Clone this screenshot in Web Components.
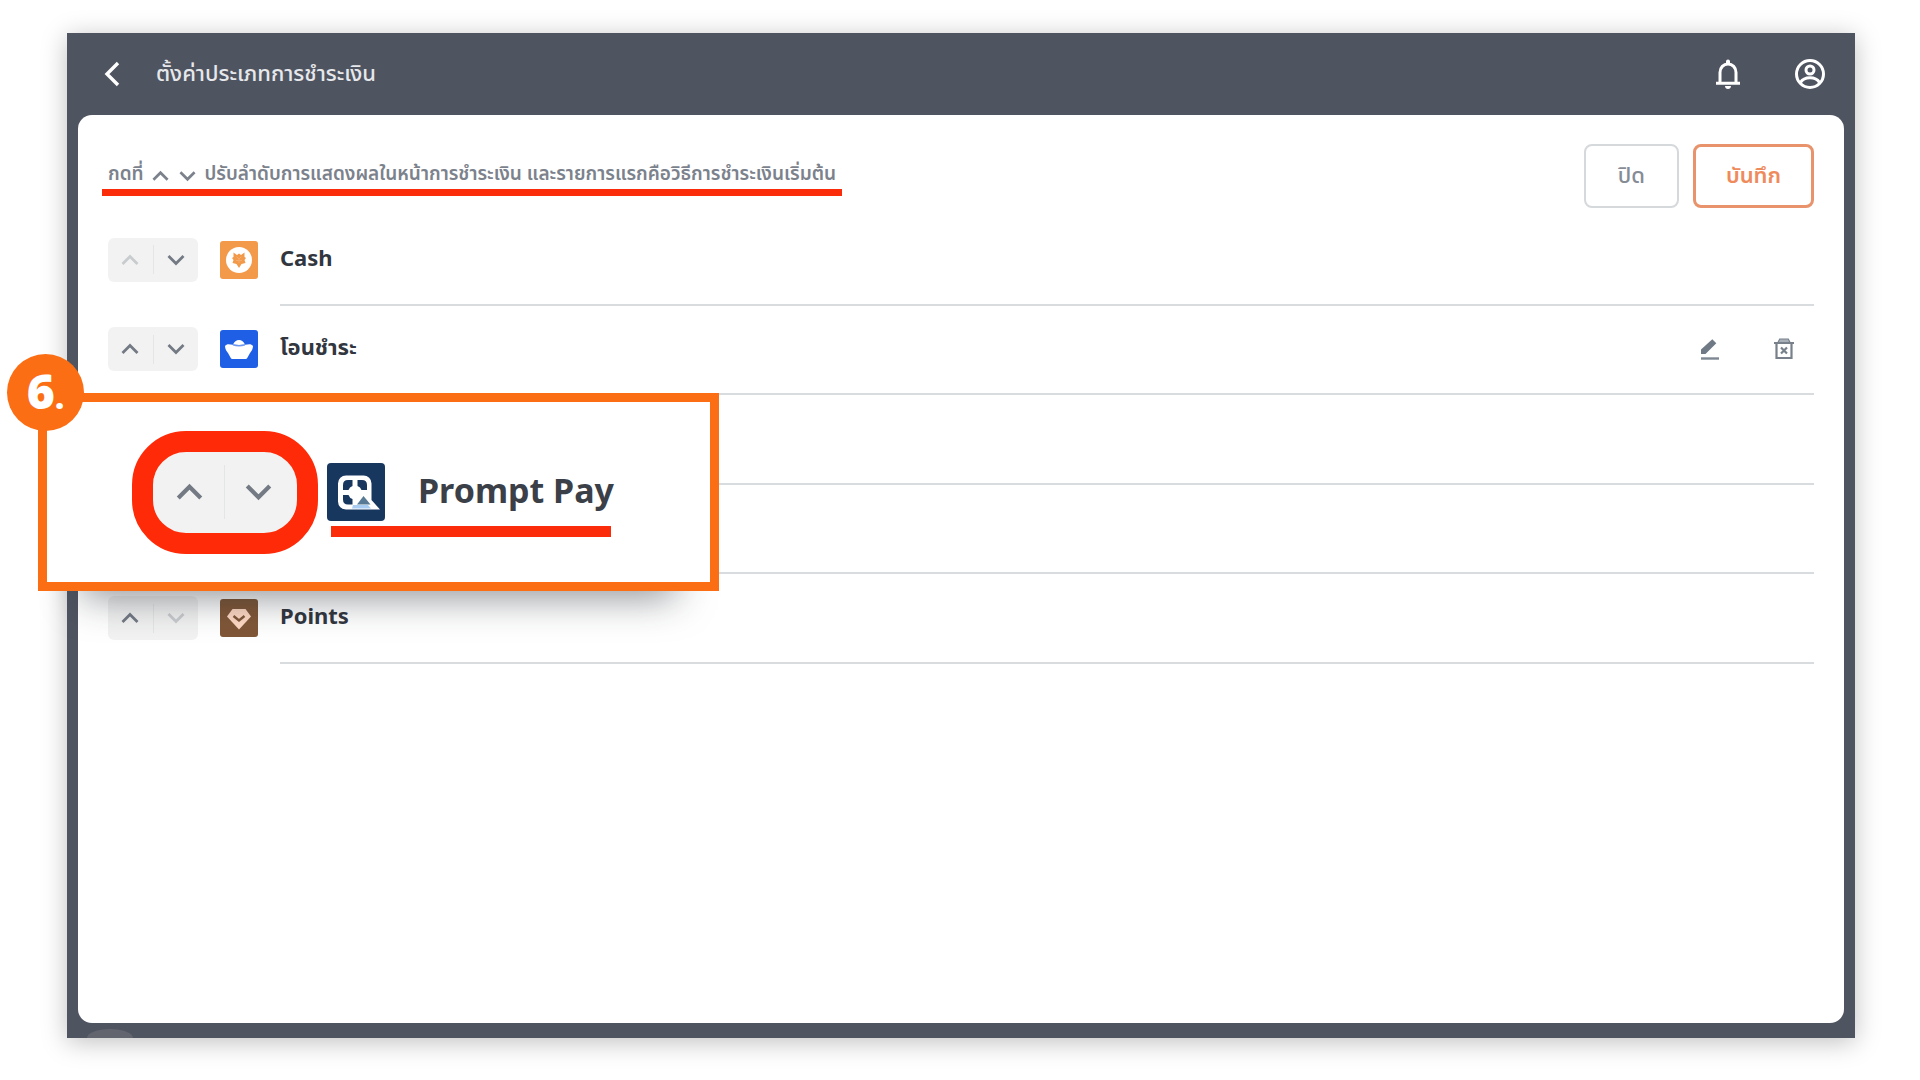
<!DOCTYPE html>
<html lang="th">
<head>
<meta charset="utf-8">
<meta name="viewport" content="width=device-width, initial-scale=1">
<title>ตั้งค่าประเภทการชำระเงิน</title>
<style>
  body {
    margin: 0;
    background: #fff;
    font-family: "Noto Sans", "Noto Sans Thai", "Open Sans", sans-serif;
    color: #32363f;
  }
</style>
</head>
<body>
  <guide-stage>
    <payment-screen>
      <app-header slot="header">ตั้งค่าประเภทการชำระเงิน</app-header>
      <order-toolbar></order-toolbar>
      <payment-list>
        <payment-row icon="cash" first>Cash</payment-row>
        <payment-row icon="transfer" editable>โอนชำระ</payment-row>
        <payment-row></payment-row>
        <payment-row></payment-row>
        <payment-row icon="points" last>Points</payment-row>
      </payment-list>
    </payment-screen>
    <step-callout slot="callout" step="6" icon="promptpay">Prompt Pay</step-callout>
  </guide-stage>

  <script>
    const ICONS = {
      back: '<svg viewBox="0 0 16 26"><path d="M14 2 3 13l11 11" fill="none" stroke="#fff" stroke-width="3.4"/></svg>',
      up: '<svg viewBox="0 0 18 12"><path d="M1.5 10 9 2.5l7.5 7.5" fill="none" stroke="currentColor" stroke-width="2.8"/></svg>',
      down: '<svg viewBox="0 0 18 12"><path d="M1.5 2 9 9.5l7.5-7.5" fill="none" stroke="currentColor" stroke-width="2.8"/></svg>',
      bell: '<svg viewBox="0 0 26 30"><path d="M5 24V13.500C5 8.500 8.500 5 13 5s8 3.500 8 8.500V24" fill="none" stroke="#fff" stroke-width="3"/><path d="M1 22.800h24v3H1zM10 27h6c0 1.800-1.300 3-3 3s-3-1.200-3-3zM11 5V2.500a2 2 0 0 1 4 0V5z" fill="#fff"/></svg>',
      user: '<svg viewBox="0 0 30 30"><g fill="none" stroke="#fff" stroke-width="3"><circle cx="15" cy="15" r="13.500"/><circle cx="15" cy="11" r="4"/><path d="M5.500 23.500C7.500 20 11 18.700 15 18.700s7.500 1.300 9.500 4.800"/></g></svg>',
      edit: '<svg viewBox="0 0 20 22"><path d="M1 16v-4.500L12.300 1.200l4 4L5.500 16z" fill="#6f7a86"/><path d="M1 20.500h18" stroke="#7d8791" stroke-width="2.400"/></svg>',
      trash: '<svg viewBox="0 0 20 22"><g fill="none" stroke="#77808b" stroke-width="2.200"><path d="M2.500 5.500V20h15V5.500M0 5h20M4.500 4.500 6 1.500h8l1.500 3M7 9.500l6 6M13 9.500l-6 6"/></g><path d="M5 4l1-2.500h8L15 4z" fill="#a9b0b7"/></svg>',
      cash: '<svg viewBox="0 0 38 38"><rect width="38" height="38" rx="3" fill="#f2994a"/><circle cx="19" cy="19" r="13" fill="#fff"/><path d="M13.500 11.500l3.500 2.500 2-1.500 2 1.500 3.500-2.500v4.500l1.500 1-1.500 2 1 3-4 1-2.500 4-2.500-4-4-1 1-3-1.500-2 1.500-1z" fill="#f2994a"/><path d="M16.500 15.500l2.500 2.500 2.500-2.500M16 19.500h6M19 18v4" fill="none" stroke="#f5ab6c" stroke-width="1"/></svg>',
      transfer: '<svg viewBox="0 0 38 38"><rect width="38" height="38" rx="3" fill="#1f5fe6"/><path d="M5 16c2-3 5-1.500 8-1.200C14 11.500 16.500 10 19 10s5 1.500 6 4.800c3-.3 6-1.800 8 1.200 0 3-1.500 5-3 7l-2.500 4.500c-.5 1-1.200 1.500-2.500 1.500H13c-1.300 0-2-.5-2.500-1.500L8 23c-1.500-2-3-4-3-7z" fill="#fff"/><path d="M13 14.800c3.500 1 8.500 1 12 0" fill="none" stroke="#6e98f0" stroke-width="1.500"/></svg>',
      points: '<svg viewBox="0 0 38 38"><rect width="38" height="38" rx="3" fill="#805738"/><path d="M12.500 10h13l5.500 7.500L19 30.500 7 17.500z" fill="#ffd9c4"/><path d="M13.500 17l5.500 4.500 5.500-4.500" fill="none" stroke="#805738" stroke-width="2.400"/></svg>',
      promptpay: '<svg viewBox="0 0 58 58"><rect width="58" height="58" rx="4" fill="#18375f"/><path d="M19 12.500h17.500a8 8 0 0 1 8 8V37l8.500 9.500H19a8 8 0 0 1-8-8v-18a8 8 0 0 1 8-8z" fill="#fff"/><path d="M25.500 17v6q-3 1-4 4H16v-5q0-5 5-5zM30.500 17v6q3 1 4 4H40v-5q0-5-5-5zM16 32h5.500q1 3 4 4v5.500H21q-5 0-5-5z" fill="#18375f"/><path d="M25 45.500l1-3.500h15l3 3.500z" fill="#a9cdf2"/><path d="M30 41.500l6.500-8.500 7 8.500z" fill="#587a94"/></svg>'
    };

    class GuideStage extends HTMLElement {
      connectedCallback() {
        this.attachShadow({ mode: 'open' });
        this.shadowRoot.innerHTML = `
          <style>
            :host {
              box-sizing: border-box;
              display: flex;
              position: relative;
              min-height: 100vh;
              padding: 33px 65px 42px 67px;
            }
            ::slotted(payment-screen) { flex: 1; }
            /* the callout lies over the screen it explains */
            ::slotted(step-callout) {
              position: absolute;
              top: 393px;
              left: 38px;
            }
          </style>
          <slot></slot>
          <slot name="callout"></slot>
        `;
      }
    }

    class PaymentScreen extends HTMLElement {
      connectedCallback() {
        this.attachShadow({ mode: 'open' });
        this.shadowRoot.innerHTML = `
          <style>
            :host {
              box-sizing: border-box;
              display: flex;
              flex-direction: column;
              position: relative;
              padding: 0 11px 15px;
              background: #4f5461;
              box-shadow: 0 4px 24px rgba(0, 0, 0, 0.25);
            }
            main {
              flex: 1;
              padding: 29px 30px;
              border-radius: 14px;
              background: #fff;
            }
            .bump {
              position: absolute;
              left: 20px;
              bottom: 0;
              width: 46px;
              height: 9px;
              border-radius: 50% 50% 0 0 / 100% 100% 0 0;
              background: #62656e;
            }
          </style>
          <slot name="header"></slot>
          <main><slot></slot></main>
          <div class="bump"></div>
        `;
      }
    }

    class AppHeader extends HTMLElement {
      connectedCallback() {
        this.attachShadow({ mode: 'open' });
        this.shadowRoot.innerHTML = `
          <style>
            :host { display: block; }
            header {
              display: flex;
              align-items: center;
              height: 82px;
              padding: 0 19px 0 26px;
              color: #e6e8eb;
            }
            h1 {
              flex: 1;
              margin: 0 0 0 36px;
              padding-bottom: 4px;
              font-size: 22px;
              font-weight: 500;
              line-height: 32px;
            }
            button {
              display: flex;
              padding: 0;
              border: 0;
              background: none;
            }
            .back svg { width: 16px; height: 26px; }
            .bell svg { width: 26px; height: 30px; }
            .user svg { width: 30px; height: 30px; }
            .user { margin-left: 54px; }
          </style>
          <header>
            <button class="back" type="button">${ICONS.back}</button>
            <h1><slot></slot></h1>
            <button class="bell" type="button">${ICONS.bell}</button>
            <button class="user" type="button">${ICONS.user}</button>
          </header>
        `;
      }
    }

    class OrderToolbar extends HTMLElement {
      connectedCallback() {
        this.attachShadow({ mode: 'open' });
        this.shadowRoot.innerHTML = `
          <style>
            :host {
              display: flex;
              align-items: center;
              gap: 14px;
            }
            .hint {
              margin: 0 auto 0 -6px;
              padding: 0 6px;
              border-bottom: 7px solid #fb2c0a;
              color: #7c828c;
              font-size: 19px;
              font-weight: 600;
              line-height: 32px;
              white-space: nowrap;
            }
            .hint svg {
              width: 17px;
              height: 12px;
              margin: 0 3px;
              vertical-align: -2px;
            }
            button {
              box-sizing: border-box;
              height: 64px;
              padding: 0 32px;
              border: 2px solid #d5d9dc;
              border-radius: 8px;
              background: #fff;
              color: #868c96;
              font: inherit;
              font-size: 22px;
              font-weight: 500;
            }
            .save {
              padding: 0 30px;
              border: 3px solid #e8936c;
              color: #ee8a5c;
              font-weight: 600;
            }
          </style>
          <p class="hint">กดที่ ${ICONS.up} ${ICONS.down} ปรับลำดับการแสดงผลในหน้าการชำระเงิน และรายการแรกคือวิธีการชำระเงินเริ่มต้น</p>
          <button type="button">ปิด</button>
          <button class="save" type="button">บันทึก</button>
        `;
      }
    }

    class PaymentList extends HTMLElement {
      connectedCallback() {
        this.attachShadow({ mode: 'open' });
        this.shadowRoot.innerHTML = `
          <style>
            :host {
              display: grid;
              grid-auto-rows: 1fr;
              height: 448px;
              margin-top: 8px;
            }
          </style>
          <slot></slot>
        `;
      }
    }

    class OrderStepper extends HTMLElement {
      connectedCallback() {
        this.attachShadow({ mode: 'open' });
        const up = this.hasAttribute('no-up') ? 'disabled' : '';
        const down = this.hasAttribute('no-down') ? 'disabled' : '';
        this.shadowRoot.innerHTML = `
          <style>
            :host {
              --arrow: 18px;
              display: flex;
              align-items: center;
              width: 90px;
              height: 44px;
              border-radius: 6px;
              background: rgba(0, 0, 0, 0.05);
            }
            :host([large]) {
              --arrow: 27px;
              box-sizing: border-box;
              width: 186px;
              height: 123px;
              padding: 0 4px 0 2px;
              border: 21px solid #fe2a08;
              border-radius: 54px;
              background: #f2f2f2;
            }
            button {
              display: flex;
              flex: 1;
              justify-content: center;
              padding: 0;
              border: 0;
              background: none;
              color: #737a84;
            }
            button:disabled { color: #c9cccf; }
            svg { width: var(--arrow); }
            i {
              width: 1px;
              height: 66%;
              background: #e4e5e6;
            }
          </style>
          <button type="button" ${up}>${ICONS.up}</button>
          <i></i>
          <button type="button" ${down}>${ICONS.down}</button>
        `;
      }
    }

    class PaymentRow extends HTMLElement {
      connectedCallback() {
        this.attachShadow({ mode: 'open' });
        const icon = this.getAttribute('icon');
        const stepper = `<order-stepper ${this.hasAttribute('first') ? 'no-up' : ''} ${this.hasAttribute('last') ? 'no-down' : ''}></order-stepper>`;
        const actions = `
          <button type="button">${ICONS.edit}</button>
          <button type="button">${ICONS.trash}</button>`;
        this.shadowRoot.innerHTML = `
          <style>
            :host {
              display: grid;
              grid-template-columns: 90px 38px 1fr;
              gap: 22px;
              align-items: center;
            }
            order-stepper, .icon { margin-bottom: 2px; }
            .icon svg {
              display: block;
              width: 38px;
              height: 38px;
            }
            .body {
              box-sizing: border-box;
              display: flex;
              grid-column: 3;
              align-items: center;
              gap: 54px;
              height: 100%;
              padding-right: 20px;
              border-bottom: 2px solid #d9dcde;
            }
            .name {
              flex: 1;
              padding-bottom: 6px;
              font-size: 22px;
              font-weight: 700;
              line-height: 32px;
            }
            button {
              display: flex;
              padding: 0;
              border: 0;
              background: none;
            }
            button svg { width: 20px; height: 22px; }
          </style>
          ${icon ? stepper : ''}
          ${icon ? `<span class="icon">${ICONS[icon]}</span>` : ''}
          <div class="body">
            <span class="name"><slot></slot></span>
            ${this.hasAttribute('editable') ? actions : ''}
          </div>
        `;
      }
    }

    class StepCallout extends HTMLElement {
      connectedCallback() {
        this.attachShadow({ mode: 'open' });
        this.shadowRoot.innerHTML = `
          <style>
            :host {
              box-sizing: border-box;
              display: flex;
              align-items: center;
              width: 681px;
              height: 198px;
              padding-left: 85px;
              border: 9px solid #fb6e14;
              background: #fff;
              box-shadow: 0 50px 38px -44px rgba(30, 36, 44, 0.5);
            }
            .badge {
              position: absolute;
              top: -48px;
              left: -40px;
              display: flex;
              align-items: baseline;
              justify-content: center;
              width: 77px;
              height: 77px;
              border-radius: 50%;
              background: #fb6e14;
              color: #fff;
              font-family: "Open Sans", sans-serif;
              font-size: 48px;
              font-weight: 800;
              line-height: 74px;
            }
            .badge small { font-size: 32px; }
            .method {
              display: flex;
              align-items: center;
              gap: 33px;
              position: relative;
              margin-left: 9px;
              color: #3b4048;
              font-size: 34px;
              font-weight: 700;
              line-height: 54px;
            }
            .method svg { display: block; width: 58px; height: 58px; }
            .name { padding-bottom: 4px; }
            .method::after {
              content: "";
              position: absolute;
              top: 63px;
              left: 4px;
              right: 3px;
              height: 11px;
              background: #fb2c0a;
            }
          </style>
          <div class="badge">${this.getAttribute('step')}<small>.</small></div>
          <order-stepper large></order-stepper>
          <div class="method">
            ${ICONS[this.getAttribute('icon')]}
            <span class="name"><slot></slot></span>
          </div>
        `;
      }
    }

    customElements.define('guide-stage', GuideStage);
    customElements.define('payment-screen', PaymentScreen);
    customElements.define('app-header', AppHeader);
    customElements.define('order-toolbar', OrderToolbar);
    customElements.define('payment-list', PaymentList);
    customElements.define('order-stepper', OrderStepper);
    customElements.define('payment-row', PaymentRow);
    customElements.define('step-callout', StepCallout);
  </script>
</body>
</html>
